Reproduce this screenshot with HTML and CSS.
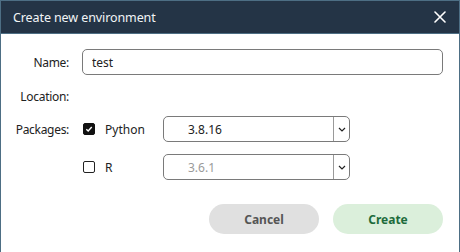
FILE: index.html
```html
<!DOCTYPE html>
<html lang="en">
<head>
  <meta charset="UTF-8">
  <meta name="viewport" content="width=device-width, initial-scale=1.0">
  <title>Create new environment</title>
  <link rel="stylesheet" href="styles.css">
</head>
<body>
  <div class="dialog">
    <div class="titlebar">
      <span class="title">Create new environment</span>
      <svg class="close" width="12" height="12" viewBox="0 0 12 12">
        <path d="M1 1 L11 11 M11 1 L1 11" stroke="#fff" stroke-width="1.6" stroke-linecap="round"/>
      </svg>
    </div>
    <div class="content">
      <div class="row row-name">
        <label class="label">Name:</label>
        <input class="text-input" type="text" value="test">
      </div>
      <div class="row row-location">
        <span class="label">Location:</span>
      </div>
      <div class="row row-pkg">
        <span class="label">Packages:</span>
        <span class="check checked">
          <svg width="12" height="12" viewBox="0 0 12 12">
            <path d="M2.8 6.2 L5 8.3 L9.3 3.6" fill="none" stroke="#fff" stroke-width="1.7"/>
          </svg>
        </span>
        <span class="pkg-name">Python</span>
        <div class="select">
          <span class="select-value">3.8.16</span>
          <span class="select-arrow">
            <svg width="8" height="5" viewBox="0 0 8 5"><path d="M1 1 L4 4 L7 1" fill="none" stroke="#222" stroke-width="1.2"/></svg>
          </span>
        </div>
      </div>
      <div class="row row-pkg row-r">
        <span class="label"></span>
        <span class="check"></span>
        <span class="pkg-name">R</span>
        <div class="select disabled">
          <span class="select-value">3.6.1</span>
          <span class="select-arrow">
            <svg width="8" height="5" viewBox="0 0 8 5"><path d="M1 1 L4 4 L7 1" fill="none" stroke="#222" stroke-width="1.2"/></svg>
          </span>
        </div>
      </div>
      <div class="actions">
        <button class="btn btn-cancel">Cancel</button>
        <button class="btn btn-create">Create</button>
      </div>
    </div>
  </div>
</body>
</html>
```

FILE: styles.css
```css
body {
  margin: 0;
  font-family: "Noto Sans", "Open Sans", sans-serif;
  color: #222;
  background: #fff;
}
.dialog {
  width: 460px;
  height: 252px;
  box-sizing: border-box;
  border: 1px solid #4d6e84;
  border-bottom: none;
  overflow: hidden;
}
.titlebar {
  height: 32px;
  background: #243446;
  border-bottom: 1px solid #4d6e84;
  display: flex;
  align-items: center;
  justify-content: space-between;
  padding: 0 13px 0 12px;
}
.title {
  color: #f2f4f6;
  font-size: 12.5px;
  letter-spacing: -0.1px;
}
.close {
  display: block;
}
.content {
  padding: 15px 16px 0 0;
}
.row {
  display: flex;
  align-items: center;
  height: 26px;
}
.label {
  width: 68px;
  text-align: right;
  font-size: 12px;
  letter-spacing: -0.3px;
  margin-right: 13px;
  flex-shrink: 0;
}
.text-input {
  flex: 1;
  height: 26px;
  box-sizing: border-box;
  border: 1px solid #7a7a7a;
  border-radius: 5px;
  padding: 0 9px;
  font-family: inherit;
  font-size: 12px;
  color: #222;
  outline: none;
}
.row-location {
  height: 41px;
  padding-top: 2px;
  box-sizing: border-box;
}
.check {
  width: 12px;
  height: 12px;
  box-sizing: border-box;
  border: 1.5px solid #222;
  border-radius: 2px;
  margin-left: 1px;
  flex-shrink: 0;
}
.check.checked {
  background: #111;
  border-color: #111;
  display: flex;
  align-items: center;
  justify-content: center;
}
.check.checked svg {
  display: block;
}
.pkg-name {
  font-size: 12px;
  margin-left: 10px;
  width: 58px;
}
.select {
  width: 187px;
  height: 26px;
  box-sizing: border-box;
  border: 1px solid #7a7a7a;
  border-radius: 5px;
  display: flex;
  align-items: center;
}
.select-value {
  flex: 1;
  font-size: 12px;
  padding-left: 24px;
}
.select.disabled .select-value {
  color: #9a9a9a;
}
.select-arrow {
  width: 15px;
  height: 100%;
  border-left: 1px solid #9a9a9a;
  display: flex;
  align-items: center;
  justify-content: center;
}
.select-arrow svg {
  display: block;
}
.row-r {
  margin-top: 12px;
}
.actions {
  display: flex;
  justify-content: flex-end;
  gap: 14px;
  margin-top: 24px;
}
.btn {
  width: 110px;
  height: 30px;
  border: none;
  border-radius: 15px;
  font-family: inherit;
  font-size: 12px;
  font-weight: bold;
  cursor: pointer;
}
.btn-cancel {
  background: #e0e0e0;
  color: #555;
}
.btn-create {
  background: #dbefdb;
  color: #1d6b3b;
}
```
